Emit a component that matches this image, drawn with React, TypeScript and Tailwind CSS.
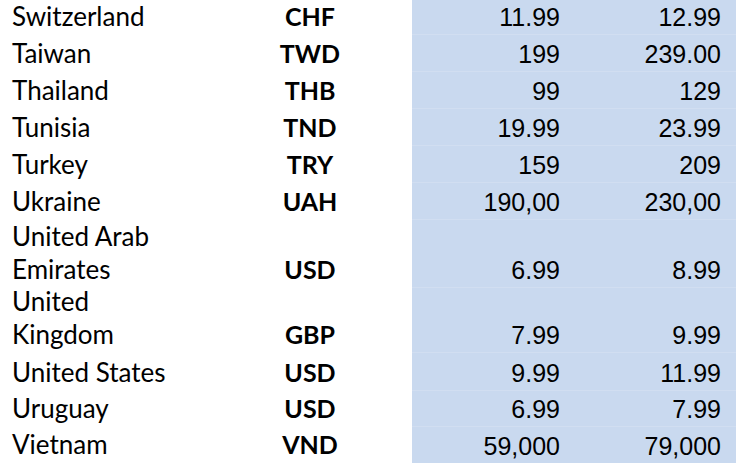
const rows = [
  { country: ["Switzerland"], code: "CHF", a: "11.99", b: "12.99", h: "h-[35px]" },
  { country: ["Taiwan"], code: "TWD", a: "199", b: "239.00", h: "h-[37px]" },
  { country: ["Thailand"], code: "THB", a: "99", b: "129", h: "h-[37px]" },
  { country: ["Tunisia"], code: "TND", a: "19.99", b: "23.99", h: "h-[37px]" },
  { country: ["Turkey"], code: "TRY", a: "159", b: "209", h: "h-[37px]" },
  { country: ["Ukraine"], code: "UAH", a: "190,00", b: "230,00", h: "h-[37px]" },
  { country: ["United Arab", "Emirates"], code: "USD", a: "6.99", b: "8.99", h: "h-[68px]" },
  { country: ["United", "Kingdom"], code: "GBP", a: "7.99", b: "9.99", h: "h-[65px]" },
  { country: ["United States"], code: "USD", a: "9.99", b: "11.99", h: "h-[38px]" },
  { country: ["Uruguay"], code: "USD", a: "6.99", b: "7.99", h: "h-[36px]" },
  { country: ["Vietnam"], code: "VND", a: "59,000", b: "79,000", h: "h-[36px]" },
];

export default function App() {
  return (
    <div className="w-[738px] h-[467px] bg-white text-black overflow-hidden flex flex-col">
      {rows.map((r, i) => (
        <div key={i} className={`flex ${r.h}`}>
          <div className="w-[250px] pl-[12px] flex flex-col justify-end pb-[2px] font-['Lato',sans-serif] text-[26px] leading-[33px]">
            {r.country.map((c) => (
              <div key={c}>{c}</div>
            ))}
          </div>
          <div className="w-[120px] flex items-end justify-center pb-[2px] font-['Lato',sans-serif] font-bold text-[25px] leading-[33px]">
            {r.code}
          </div>
          <div className="w-[42px]" />
          <div
            className={`w-[324px] bg-[#c9d9ef] flex items-end font-['Liberation_Sans',Arial,sans-serif] text-[25px] leading-[28px] ${
              i < rows.length - 1 ? "border-b border-[#d1def1]" : ""
            }`}
          >
            <div className="w-[160px] text-right pr-[12px] pb-[3px]">{r.a}</div>
            <div className="w-[164px] text-right pr-[15px] pb-[3px]">{r.b}</div>
          </div>
        </div>
      ))}
    </div>
  );
}
